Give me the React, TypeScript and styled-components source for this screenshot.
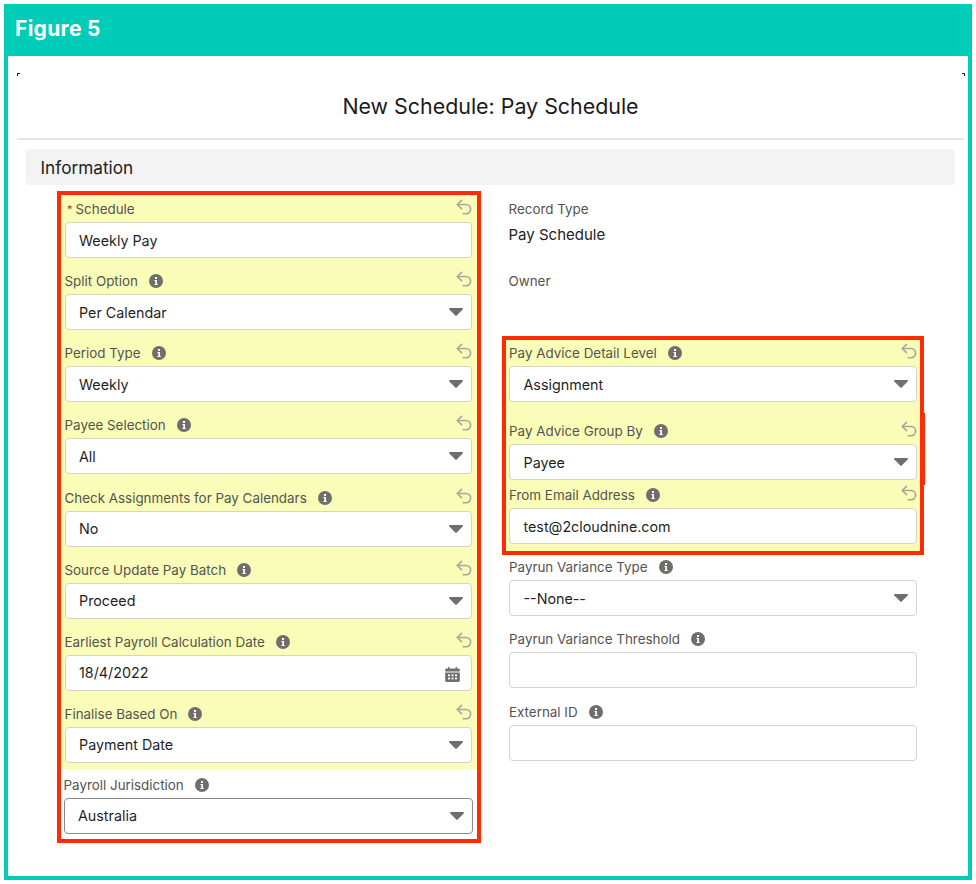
import React from 'react';
import styled, { createGlobalStyle } from 'styled-components';
import { Undo2 } from 'lucide-react';

const Global = createGlobalStyle`
  html, body {
    margin: 0;
    padding: 0;
    background: #fff;
  }
  body {
    font-family: 'Inter', 'Liberation Sans', sans-serif;
    color: #181818;
  }
`;

const Frame = styled.div`
  box-sizing: border-box;
  width: 968px;
  height: 876px;
  margin: 4px;
  border: 4px solid #00ccb8;
  border-top: 0;
  overflow: hidden;
`;

const Header = styled.div`
  height: 52px;
  margin: 0 -4px;
  padding-left: 11px;
  background: #00ccb8;
  color: #fff;
  font-family: 'Inter', 'Liberation Sans', sans-serif;
  font-weight: 700;
  font-size: 21px;
  letter-spacing: 0.3px;
  line-height: 49px;
`;

const Ticks = styled.div`
  display: flex;
  justify-content: space-between;
  height: 3px;
  padding: 17px 3px 0 9px;
`;

const Tick = styled.span<{ $right?: boolean }>`
  width: 2px;
  height: 2px;
  border-top: 1px solid #222;
  ${(p) => (p.$right ? 'border-right: 1px solid #222;' : 'border-left: 1px solid #222;')}
`;

const Title = styled.h1`
  margin: 16px 0;
  font-size: 21.4px;
  line-height: 29px;
  padding-bottom: 1px;
  font-weight: 400;
  text-align: center;
  color: #1b1b1b;
  padding-left: 5px;
`;

const Divider = styled.div`
  height: 2px;
  margin: 0 4px 0 9px;
  background: #e6e6e6;
`;

const SectionBar = styled.div`
  height: 36px;
  margin: 9px 13px 6px 18px;
  padding-left: 14.5px;
  background: #f3f3f3;
  border-radius: 4px;
  font-size: 17.2px;
  line-height: 38px;
  color: #222;
`;

const Form = styled.div`
  display: flex;
  align-items: flex-start;
  gap: 21px;
  padding-left: 49px;
`;

const RedBox = styled.div<{ $w: number }>`
  box-sizing: border-box;
  width: ${(p) => p.$w}px;
  border: 4px solid #fb2c06;
`;

const Column = styled.div`
  width: 422px;
`;

const Field = styled.div<{
  $hl?: boolean;
  $pb?: number;
  $pl?: number;
  $pr?: number;
  $jog?: boolean;
}>`
  position: relative;
  padding: 0 ${(p) => p.$pr ?? 5}px ${(p) => p.$pb ?? 9.15}px ${(p) => p.$pl ?? 3.5}px;
  background: ${(p) => (p.$hl ? '#f9fdb8' : 'transparent')};
  ${(p) =>
    p.$jog &&
    `&::after {
      content: '';
      position: absolute;
      top: -5px;
      right: -5px;
      width: 1px;
      height: 72px;
      background: #fb2c06;
    }`}
`;

const LabelRow = styled.div<{ $h?: number }>`
  display: flex;
  align-items: flex-end;
  height: ${(p) => p.$h ?? 27}px;
  padding-bottom: 5px;
  box-sizing: border-box;
`;

const Label = styled.span`
  font-size: 13.4px;
  line-height: 16px;
  color: #54534f;
  white-space: nowrap;
`;

const Star = styled.span`
  font-size: 11px;
  line-height: 16px;
  color: #e5222a;
  margin: 0 3px 0 2.5px;
`;

const InfoDot = styled.svg`
  width: 14px;
  height: 14px;
  margin-left: 11px;
  margin-bottom: 1px;
  flex: none;
`;

const UndoWrap = styled.span`
  margin-left: auto;
  margin-right: -2px;
  height: 20px;
  color: #a6a69a;
`;

const Control = styled.div<{ $focus?: boolean }>`
  box-sizing: border-box;
  display: flex;
  align-items: center;
  justify-content: space-between;
  height: 36px;
  padding: 0 8.5px 0 13.5px;
  background: #fff;
  border: 1px solid ${(p) => (p.$focus ? '#8a8a8a' : '#d4d4c8')};
  border-radius: 4px;
  font-size: 14.3px;
  color: #1f1f1f;
`;

const Caret = styled.svg`
  width: 14px;
  height: 8px;
  flex: none;
`;

const CalendarIcon = styled.svg`
  width: 15px;
  height: 15px;
  margin-top: 3px;
  margin-right: 3px;
  flex: none;
`;

const ReadValue = styled.div`
  font-size: 15px;
  line-height: 18px;
  color: #222;
  padding-top: 4px;
`;

const Info = () => (
  <InfoDot viewBox="0 0 14 14">
    <circle cx="7" cy="7" r="7" fill="#706e6b" />
    <rect x="6" y="3" width="2" height="2" fill="#fff" />
    <path d="M5.4 6h2.6v4h.8v1H5.4v-1h.9V7h-.9z" fill="#fff" />
  </InfoDot>
);

const DownCaret = () => (
  <Caret viewBox="0 0 14 8">
    <path d="M1 0h12c.8 0 1.2.8.7 1.4L7.7 7.6c-.4.4-1 .4-1.4 0L.3 1.4C-.2.8.2 0 1 0z" fill="#706e6b" />
  </Caret>
);

const Calendar = () => (
  <CalendarIcon viewBox="0 0 15 15">
    <path
      d="M3 0h1.4v1.6h6.2V0H12v1.6h1.4c.8 0 1.4.6 1.4 1.4v1.4H.2V3c0-.8.6-1.4 1.4-1.4H3zM.2 5.6h14.6v8c0 .8-.6 1.4-1.4 1.4H1.6C.8 15 .2 14.4.2 13.6z"
      fill="#706e6b"
    />
    <g fill="#fff">
      <rect x="3" y="7.4" width="2" height="1.8" />
      <rect x="6.5" y="7.4" width="2" height="1.8" />
      <rect x="10" y="7.4" width="2" height="1.8" />
      <rect x="3" y="10.6" width="2" height="1.8" />
      <rect x="6.5" y="10.6" width="2" height="1.8" />
      <rect x="10" y="10.6" width="2" height="1.8" />
    </g>
  </CalendarIcon>
);

type Item = {
  label: string;
  value?: string;
  kind?: 'select' | 'date' | 'text';
  info?: boolean;
  required?: boolean;
  undo?: boolean;
  focus?: boolean;
  hl?: boolean;
  row?: number;
  pb?: number;
  jog?: boolean;
};

const leftFields: Item[] = [
  { label: 'Schedule', value: 'Weekly Pay', kind: 'text', required: true, undo: true, hl: true },
  { label: 'Split Option', value: 'Per Calendar', kind: 'select', info: true, undo: true, hl: true },
  { label: 'Period Type', value: 'Weekly', kind: 'select', info: true, undo: true, hl: true },
  { label: 'Payee Selection', value: 'All', kind: 'select', info: true, undo: true, hl: true },
  { label: 'Check Assignments for Pay Calendars', value: 'No', kind: 'select', info: true, undo: true, hl: true },
  { label: 'Source Update Pay Batch', value: 'Proceed', kind: 'select', info: true, undo: true, hl: true },
  { label: 'Earliest Payroll Calculation Date', value: '18/4/2022', kind: 'date', info: true, undo: true, hl: true },
  { label: 'Finalise Based On', value: 'Payment Date', kind: 'select', info: true, undo: true, hl: true, pb: 6 },
];

const jurisdiction: Item = {
  label: 'Payroll Jurisdiction',
  value: 'Australia',
  kind: 'select',
  info: true,
  focus: true,
  row: 29,
  pb: 5,
};

const adviceFields: Item[] = [
  { label: 'Pay Advice Detail Level', value: 'Assignment', kind: 'select', info: true, undo: true, hl: true, row: 26, pb: 16 },
  { label: 'Pay Advice Group By', value: 'Payee', kind: 'select', info: true, undo: true, hl: true, row: 26, pb: 2, jog: true },
  { label: 'From Email Address', value: 'test@2cloudnine.com', kind: 'text', info: true, undo: true, hl: true, row: 26, pb: 7 },
];

const lowerFields: Item[] = [
  { label: 'Payrun Variance Type', value: '--None--', kind: 'select', info: true, row: 25, pb: 10 },
  { label: 'Payrun Variance Threshold', kind: 'text', info: true, row: 26, pb: 10 },
  { label: 'External ID', kind: 'text', info: true, row: 27, pb: 0 },
];

const FormField = ({ item, pl, pr }: { item: Item; pl?: number; pr?: number }) => (
  <Field $hl={item.hl} $pb={item.pb} $pl={pl} $pr={pr} $jog={item.jog}>
    <LabelRow $h={item.row}>
      {item.required && <Star>*</Star>}
      <Label>{item.label}</Label>
      {item.info && <Info />}
      {item.undo && (
        <UndoWrap>
          <Undo2 size={20} strokeWidth={1.9} />
        </UndoWrap>
      )}
    </LabelRow>
    <Control $focus={item.focus}>
      <span>{item.value}</span>
      {item.kind === 'select' && <DownCaret />}
      {item.kind === 'date' && <Calendar />}
    </Control>
  </Field>
);

const App = () => (
  <>
    <Global />
    <Frame>
      <Header>Figure 5</Header>
      <Ticks>
        <Tick />
        <Tick $right />
      </Ticks>
      <Title>New Schedule: Pay Schedule</Title>
      <Divider />
      <SectionBar>Information</SectionBar>
      <Form>
        <RedBox $w={424}>
          {leftFields.map((item) => (
            <FormField key={item.label} item={item} />
          ))}
          <FormField item={jurisdiction} pl={2.5} pr={4} />
        </RedBox>
        <Column>
          <Field $pl={6.5} $pr={7} $pb={0}>
            <LabelRow $h={31}>
              <Label>Record Type</Label>
            </LabelRow>
            <ReadValue>Pay Schedule</ReadValue>
          </Field>
          <Field $pl={6.5} $pr={7} $pb={42}>
            <LabelRow $h={50}>
              <Label>Owner</Label>
            </LabelRow>
          </Field>
          <RedBox $w={422}>
            {adviceFields.map((item) => (
              <FormField key={item.label} item={item} pl={3} pr={3} />
            ))}
          </RedBox>
          {lowerFields.map((item) => (
            <FormField key={item.label} item={item} pl={7} pr={7} />
          ))}
        </Column>
      </Form>
    </Frame>
  </>
);

export default App;
